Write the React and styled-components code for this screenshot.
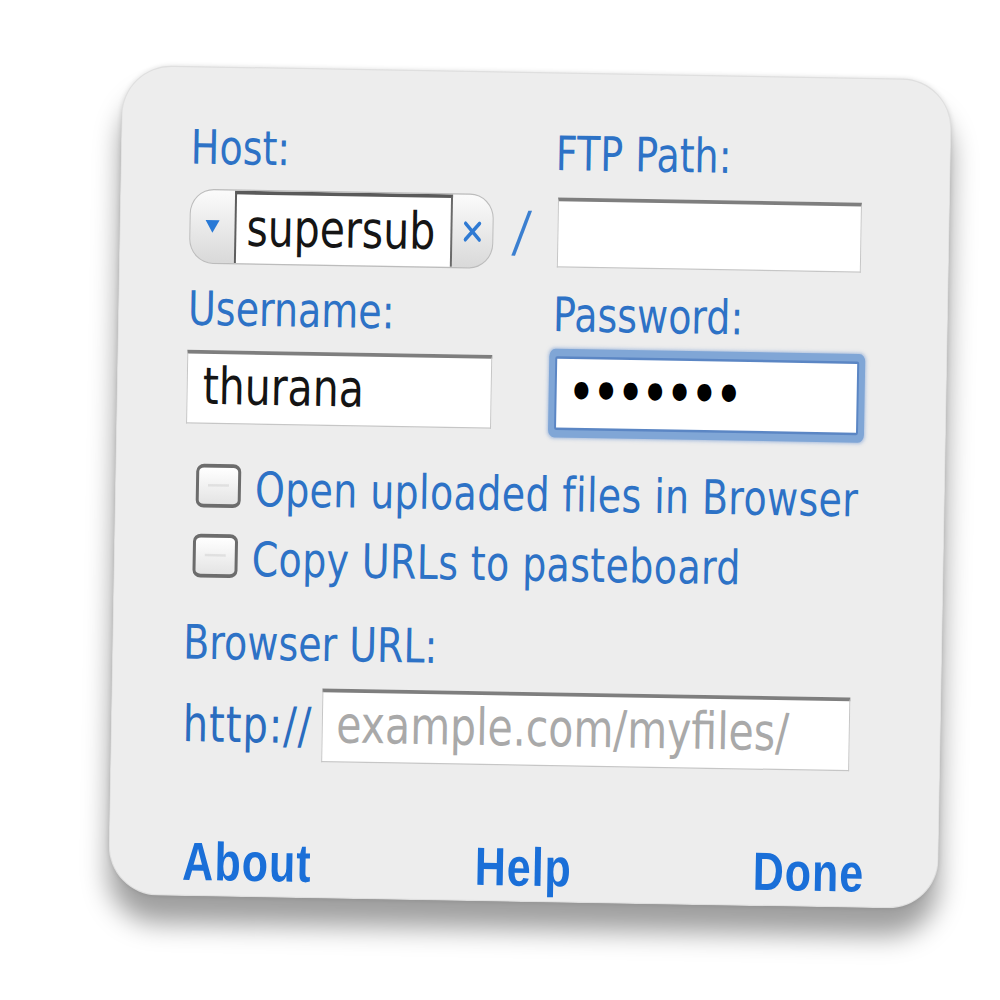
import React from "react";
import styled, { createGlobalStyle } from "styled-components";

const GlobalStyle = createGlobalStyle`
  html, body { margin: 0; padding: 0; background: #ffffff; }
  body { width: 1000px; height: 1000px; overflow: hidden; }
`;

const LABEL_BLUE = "#2d72c6";
const BUTTON_BLUE = "#1a6fd8";

const Stage = styled.div`
  padding: 155px 0 0 115px;
`;

const Panel = styled.div`
  box-sizing: border-box;
  width: 830px;
  height: 664px;
  padding: 42px 73px 0 69px;
  background: #ededed;
  border-radius: 50px / 40px;
  border: 1px solid rgba(0, 0, 0, 0.06);
  transform: rotate(1deg) scale(1, 1.25);
  transform-origin: 50% 50%;
  box-shadow: 0 22px 24px rgba(0, 0, 0, 0.38), 0 0 5px rgba(0, 0, 0, 0.12);
  display: flex;
  flex-direction: column;
  font-family: "DejaVu Sans", "Noto Sans", sans-serif;
`;

const Pair = styled.div`
  display: grid;
  grid-template-columns: 304px 64px 304px;
  align-items: center;
  height: ${(p) => p.$h}px;
  margin-top: ${(p) => p.$mt || 0}px;
`;

const Label = styled.div`
  grid-column: ${(p) => p.$col || "auto"};
  margin-left: ${(p) => p.$ml || 0}px;
  margin-top: ${(p) => p.$mt || 0}px;
  font-size: 38px;
  line-height: 44px;
  height: 44px;
  color: ${LABEL_BLUE};
  white-space: nowrap;
`;

const Combo = styled.div`
  box-sizing: border-box;
  display: flex;
  align-items: stretch;
  height: 60px;
  border: 1px solid #bcbcbc;
  border-radius: 24px / 20px;
  background: linear-gradient(#fbfbfb, #d9d9d9);
  overflow: hidden;
`;

const ComboEnd = styled.div`
  width: ${(p) => p.$w}px;
  display: flex;
  align-items: center;
  justify-content: center;
  flex: none;
`;

const ComboField = styled.div`
  flex: 1;
  box-sizing: border-box;
  background: #ffffff;
  border-left: 2px solid #5e5e5e;
  border-right: 2px solid #6a6a6a;
  border-top: 3px solid #5a5a5a;
  padding-left: 10px;
  font-size: 41px;
  line-height: 54px;
  color: #151515;
  white-space: nowrap;
  overflow: hidden;
`;

const Slash = styled.div`
  justify-self: center;
  font-size: 44px;
  line-height: 50px;
  color: #3b7fd0;
  transform: translateX(-4px) skewX(-8deg);
`;

const TextField = styled.div`
  box-sizing: border-box;
  grid-column: ${(p) => p.$col || "auto"};
  width: ${(p) => p.$w || 304}px;
  height: ${(p) => p.$h || 58}px;
  background: #ffffff;
  border: 1px solid #c6c6c6;
  border-top: 3px solid #7e7e7e;
  padding-left: ${(p) => p.$pl || 14}px;
  font-size: 41px;
  line-height: 52px;
  color: ${(p) => (p.$placeholder ? "#a9a9a9" : "#141414")};
  white-space: nowrap;
  overflow: hidden;
  ${(p) =>
    p.$focused &&
    `
    border: 2px solid #5b86c4;
    box-shadow: 0 0 0 6px #80a6d6, 0 0 3px 7px rgba(110, 150, 210, 0.5);
    border-radius: 2px;
  `}
`;

const Dots = styled.span`
  font-size: 40px;
  letter-spacing: -1px;
  color: #000;
  font-weight: bold;
`;

const CheckRow = styled.label`
  display: flex;
  align-items: center;
  gap: 14px;
  height: 44px;
  margin-top: ${(p) => p.$mt}px;
  margin-left: ${(p) => p.$ml}px;
`;

const Box = styled.span`
  box-sizing: border-box;
  width: 45px;
  height: 35px;
  flex: none;
  border: 3px solid #6c6c6c;
  border-radius: 8px / 6px;
  background: linear-gradient(#ffffff, #e4e4e4);
  margin-top: -6px;
  position: relative;
  &::after {
    content: "";
    position: absolute;
    left: 9px;
    right: 9px;
    top: 13px;
    height: 2px;
    background: rgba(0, 0, 0, 0.07);
  }
`;

const CheckText = styled.span`
  font-size: 38px;
  letter-spacing: 0.35px;
  line-height: 44px;
  color: ${LABEL_BLUE};
  white-space: nowrap;
`;

const UrlRow = styled.div`
  display: flex;
  align-items: center;
  height: 59px;
  margin-top: 13px;
  margin-left: 2px;
  gap: 9px;
`;

const Prefix = styled.span`
  font-size: 40px;
  letter-spacing: 1px;
  line-height: 44px;
  color: #2a6cbf;
`;

const Buttons = styled.div`
  display: grid;
  grid-template-columns: 1fr 1fr 1fr;
  align-items: center;
  height: 50px;
  margin-top: 56px;
  padding-left: 4px;
`;

const ActionButton = styled.button`
  justify-self: ${(p) => p.$align};
  background: none;
  border: none;
  padding: 0;
  font-family: "Liberation Sans", Arial, sans-serif;
  font-weight: bold;
  font-size: 43px;
  letter-spacing: 1px;
  line-height: 50px;
  color: ${BUTTON_BLUE};
  cursor: pointer;
`;

const ChevronDown = () => (
  <svg width="16" height="12" viewBox="0 0 16 12">
    <polygon points="1,1 15,1 8,11" fill="#2879d6" />
  </svg>
);

const ClearX = () => (
  <svg width="20" height="17" viewBox="0 0 20 17">
    <path d="M3 2 L17 15 M17 2 L3 15" stroke="#2f7ad3" strokeWidth="3.2" strokeLinecap="round" />
  </svg>
);

export default function App() {
  return (
    <>
      <GlobalStyle />
      <Stage>
        <Panel>
          <Pair $h={44}>
            <Label $col="1">Host:</Label>
            <Label $col="3" $ml={-3}>FTP Path:</Label>
          </Pair>
          <Pair $h={60} $mt={11}>
            <Combo>
              <ComboEnd $w={44}>
                <ChevronDown />
              </ComboEnd>
              <ComboField>supersub</ComboField>
              <ComboEnd $w={40}>
                <ClearX />
              </ComboEnd>
            </Combo>
            <Slash>/</Slash>
            <TextField $h={56} />
          </Pair>
          <Pair $h={44} $mt={14}>
            <Label $col="1">Username:</Label>
            <Label $col="3" $ml={-3}>Password:</Label>
          </Pair>
          <Pair $h={59} $mt={11}>
            <TextField $col="1" $w={305} $h={59} $pl={15}>
              thurana
            </TextField>
            <TextField $col="3" $h={59} $pl={12} $focused>
              <Dots>•••••••</Dots>
            </TextField>
          </Pair>
          <CheckRow $mt={30} $ml={11}>
            <Box />
            <CheckText>Open uploaded files in Browser</CheckText>
          </CheckRow>
          <CheckRow $mt={12} $ml={9}>
            <Box />
            <CheckText>Copy URLs to pasteboard</CheckText>
          </CheckRow>
          <Label $mt={23} $ml={1}>Browser URL:</Label>
          <UrlRow>
            <Prefix>http://</Prefix>
            <TextField $w={528} $h={59} $pl={14} $placeholder>
              example.com/myfiles/
            </TextField>
          </UrlRow>
          <Buttons>
            <ActionButton $align="start">About</ActionButton>
            <ActionButton $align="center">Help</ActionButton>
            <ActionButton $align="end">Done</ActionButton>
          </Buttons>
        </Panel>
      </Stage>
    </>
  );
}
